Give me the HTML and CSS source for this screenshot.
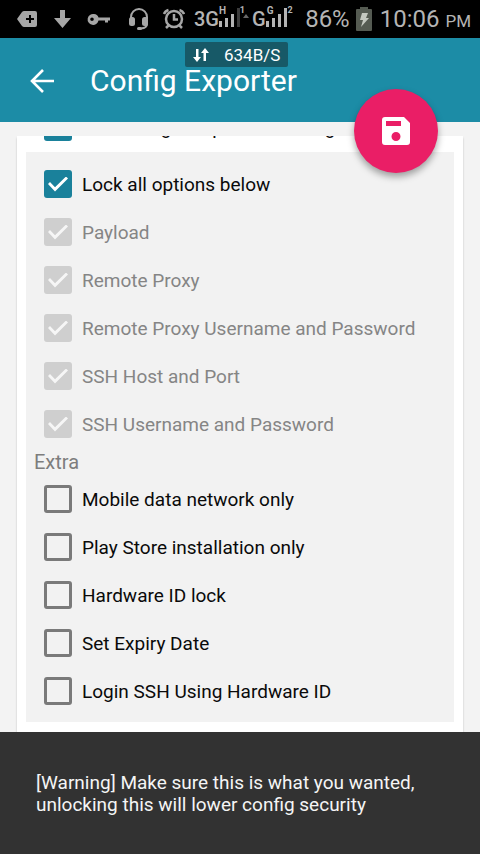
FILE: index.html
```html
<!DOCTYPE html>
<html lang="en">
<head>
<meta charset="utf-8">
<meta name="viewport" content="width=device-width, initial-scale=1">
<title>Config Exporter</title>
<link rel="stylesheet" href="styles.css">
</head>
<body>
<div class="status">
  <svg class="tray" width="168" height="38" viewBox="0 0 168 38" fill="#a6a6a6" aria-hidden="true">
    <path fill-rule="evenodd" d="M7 11h11q2 0 2 2v12q0 2-2 2H7q-1 0-2-1L0 19l5-7q1-1 2-1zM9 18v2h3v3h2v-3h3v-2h-3v-3h-2v3z"/>
    <path d="M43 10h5v8h6l-8.500 10L37 18h6z"/>
    <path fill-rule="evenodd" d="M77 14a5 5 0 0 1 4.500 3.500H93v3h-2v2h-3v-2h-6.500A5.500 5.500 0 1 1 77 14zm-2 3.500a1.800 1.800 0 1 0 0 3.600 1.800 1.800 0 0 0 0-3.600z"/>
    <g fill="none" stroke="#a6a6a6" stroke-width="2"><path d="M114 19v-2a8 8 0 0 1 16 0v2M130 24q0 4-6 4.500"/></g>
    <rect x="112" y="17" width="6" height="9" rx="2.500"/><rect x="125" y="17" width="6" height="9" rx="2.500"/><rect x="120" y="27" width="5" height="3" rx="1.500"/>
    <g fill="none" stroke="#a6a6a6" stroke-width="2.500"><circle cx="157" cy="19" r="8"/><path d="M157 14v5.500h4M147 14q1-3 4.500-4M167 14q-1-3-4.500-4M152 25l-3 3M162 25l3 3"/></g>
  </svg>
  <div class="signal first"><span class="net">3G</span>
    <svg width="33" height="28" viewBox="0 0 33 28" fill="#b4b4b4" aria-hidden="true"><path d="M0 16h3v6H0zM6 13h3v9H6zM12 9h3v13h-3z"/><path fill="#3c3c3c" d="M18 3h3v19h-3z"/><path fill="#666" d="M24 13l3-4 3 4z"/></svg><sup class="kind">H</sup><sup class="sim">1</sup></div>
  <div class="signal second"><span class="net">G</span>
    <svg width="25" height="28" viewBox="0 0 25 28" fill="#b4b4b4" aria-hidden="true"><path d="M0 16h3v6H0zM6 13h3v9H6zM12 9h3v13h-3zM18 3h3v19h-3z"/></svg><sup class="kind">G</sup><sup class="sim">2</sup></div>
  <span class="percent">86%</span>
  <svg class="battery" width="16" height="24" viewBox="0 0 16 24" aria-hidden="true"><path fill="#555b52" d="M4 0h8v2h3q1 0 1 1v20q0 1-1 1H1q-1 0-1-1V3q0-1 1-1h3z"/><path fill="#c4c8c0" d="M6 6h6l-2 5h3l-8 9 2-7H4z"/></svg>
  <span class="clock">10:06 <small>PM</small></span>
</div>
<header class="appbar">
  <button class="back" aria-label="Back"><svg width="24" height="24" viewBox="0 0 24 24" fill="none" stroke="#fff" stroke-width="2.600"><path d="M24 12H2M13 1L2 12l11 11"/></svg></button>
  <h1>Config Exporter</h1>
  <div class="speed"><svg width="16" height="14" viewBox="0 0 16 14" fill="#fff" aria-hidden="true"><path d="M3 1h2.500v8H8l-4 5-4-5h3zM10.500 13H13V5h3l-4-5-4 5h2.500z"/></svg><span>634B/S</span></div>
  <button class="save" aria-label="Save"><svg width="28" height="28" viewBox="0 0 28 28" aria-hidden="true"><path fill="#fff" fill-rule="evenodd" d="M3 0h19l6 6v19q0 3-3 3H3q-3 0-3-3V3q0-3 3-3zM4 4v5h15V4zM14 15a4.500 4.500 0 1 0 0 9 4.500 4.500 0 0 0 0-9z"/></svg></button>
</header>
<main>
  <form class="card">
    <div class="peek"><label class="row"><input type="checkbox" checked><span>Edit config and protect settings</span></label></div>
    <div class="panel">
      <label class="row"><input type="checkbox" checked><span>Lock all options below</span></label>
      <label class="row"><input type="checkbox" checked disabled><span>Payload</span></label>
      <label class="row"><input type="checkbox" checked disabled><span>Remote Proxy</span></label>
      <label class="row"><input type="checkbox" checked disabled><span>Remote Proxy Username and Password</span></label>
      <label class="row"><input type="checkbox" checked disabled><span>SSH Host and Port</span></label>
      <label class="row"><input type="checkbox" checked disabled><span>SSH Username and Password</span></label>
      <h2>Extra</h2>
      <label class="row"><input type="checkbox"><span>Mobile data network only</span></label>
      <label class="row"><input type="checkbox"><span>Play Store installation only</span></label>
      <label class="row"><input type="checkbox"><span>Hardware ID lock</span></label>
      <label class="row"><input type="checkbox"><span>Set Expiry Date</span></label>
      <label class="row"><input type="checkbox"><span>Login SSH Using Hardware ID</span></label>
    </div>
  </form>
</main>
<div class="snackbar" role="status">[Warning] Make sure this is what you wanted, unlocking this will lower config security</div>
</body>
</html>
```
FILE: styles.css
```css
* { box-sizing: border-box; }
body {
  margin: 0;
  min-height: 100vh;
  display: flex;
  flex-direction: column;
  background: #f3f3f3;
  color: #0a0a0a;
  font-family: Roboto, "Noto Sans", sans-serif;
  font-size: 19px;
}
button { border: 0; padding: 0; cursor: pointer; }
svg { display: block; flex: none; }
.status {
  height: 38px;
  padding: 0 9px 0 17px;
  display: flex;
  align-items: center;
  background: #000;
  color: #b4b4b4;
  white-space: nowrap;
}
.signal { position: relative; display: flex; align-items: center; }
.signal.first { margin-left: 9px; }
.net { font-size: 20px; font-weight: 500; }
.kind, .sim { position: absolute; font-weight: 700; line-height: 10px; }
.kind { top: 1px; font-size: 10px; }
.sim { top: 0; font-size: 9px; }
.first .kind { right: 26px; }
.first .sim { right: 7px; }
.second .kind { right: 17px; }
.second .sim { right: -2px; }
.percent { margin-left: auto; font-size: 24px; }
.battery { margin: 0 8px 0 6px; }
.clock { font-size: 24px; }
.clock small { font-size: 17px; }
.appbar {
  position: relative;
  height: 84px;
  padding: 2px 0 0 30px;
  display: flex;
  align-items: center;
  background: #1c8ca6;
  color: #fff;
}
.back { background: none; }
h1 { margin: 0 0 0 36px; font-size: 30px; font-weight: 400; line-height: 34px; }
.speed {
  position: absolute;
  left: 185px;
  top: 4px;
  height: 25px;
  padding: 0 8px;
  display: flex;
  align-items: center;
  gap: 15px;
  background: rgba(22, 80, 92, .85);
  border-radius: 2px;
  font-size: 17px;
}
.save {
  position: absolute;
  right: 42px;
  top: 51px;
  width: 84px;
  height: 84px;
  border-radius: 50%;
  display: grid;
  place-items: center;
  background: #ea1e66;
  box-shadow: 0 4px 7px rgba(0, 0, 0, .35);
}
main { flex: 1; padding: 14px 17px 0; }
.card {
  height: 100%;
  padding: 0 9px 10px;
  background: #fff;
  box-shadow: 0 2px 2px rgba(0, 0, 0, .2);
}
.peek { height: 16px; display: flex; align-items: flex-end; overflow: hidden; padding-left: 18px; }
.panel { padding: 8px 0 7px 18px; background: #f2f2f2; }
.row { height: 48px; display: flex; align-items: center; gap: 10px; }
.peek .row { height: 50px; }
h2 { margin: 0 0 0 -10px; padding-top: 2px; font-size: 20px; font-weight: 400; line-height: 25px; color: #7d7d7d; }
input {
  appearance: none;
  flex: none;
  width: 28px;
  height: 28px;
  margin: 0;
  border: 3px solid #7a7a7a;
  border-radius: 3px;
  display: grid;
  place-items: center;
}
input:checked { border: 0; background: #1a819b; }
input:checked::before {
  content: "";
  width: 20px;
  height: 15px;
  background: #fff;
  clip-path: polygon(0 50%, 10% 37%, 35% 71%, 90% 0, 100% 13%, 35% 100%);
}
input:disabled { background: #cfcfcf; }
input:disabled::before { opacity: .8; }
input:disabled + span { color: #858585; }
.snackbar {
  min-height: 122px;
  padding: 2px 36px 0;
  display: flex;
  align-items: center;
  background: #323232;
  color: #f5f5f5;
  line-height: 22px;
}
```
